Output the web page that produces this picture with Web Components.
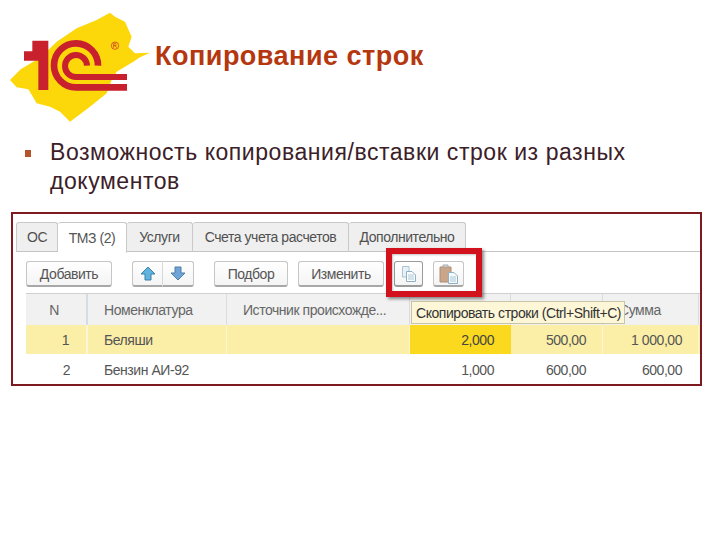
<!DOCTYPE html>
<html lang="ru">
<head>
<meta charset="UTF-8" />
<title>Копирование строк</title>
<style>
  html, body { margin: 0; background: #fff; }
</style>
</head>
<body>
<slide-page>
  <slide-header slot="head" heading="Копирование строк"></slide-header>
  <bullet-item slot="body">Возможность копирования/вставки строк из разных документов</bullet-item>
  <doc-shot slot="shot"></doc-shot>
</slide-page>

<template id="slide-page-template">
  <style>
    :host { display: block; width: 720px; height: 540px; overflow: hidden; font-family: "Liberation Sans", Arial, sans-serif; }
    .page { display: flex; flex-direction: column; }
  </style>
  <div class="page">
    <slot name="head"></slot>
    <slot name="body"></slot>
    <slot name="shot"></slot>
  </div>
</template>

<template id="slide-header-template">
  <style>
    :host { display: flex; height: 130px; align-items: flex-start; }
    svg { display: block; flex: none; width: 155px; height: 126px; }
    h1 { margin: 41px 0 0 0; font: bold 27px/30px "Liberation Sans", Arial, sans-serif; letter-spacing: .5px; color: #b5370f; white-space: nowrap; }
  </style>
  <svg viewBox="0 0 465 378" aria-hidden="true">
    <path fill="#fcd80b" d="M30 240 62 208 100 185 135 160 170 125 230 85 290 60 330 38 345 50 375 65 395 110 385 140 405 160 450 158 420 172 400 185 350 215 335 240 320 280 270 320 210 365 180 335 150 320 110 310 85 268 50 262Z"/>
    <path fill="#c8202c" d="M97 122H145V270H115V182H72V154H97Z"/>
    <g fill="none" stroke="#c8202c">
      <path stroke-width="20" d="M294 197A66 66 0 1 0 228 262H381"/>
      <path stroke-width="18" d="M261 197A33 33 0 1 0 228 231H381"/>
      <circle cx="345" cy="137" r="11" stroke-width="2"/>
      <path stroke-width="2" d="M341 143V131H347Q350 134 347 137H341M346 137 350 143"/>
    </g>
  </svg>
  <h1></h1>
</template>

<template id="bullet-item-template">
  <style>
    :host { display: flex; height: 82px; padding: 8px 70px 0 25px; box-sizing: border-box; font: 23px/29px "Liberation Sans", Arial, sans-serif; color: #3b2028; letter-spacing: .55px; }
    .mark { flex: none; width: 6px; height: 7px; margin: 12px 19px 0 0; background: #b5532c; }
  </style>
  <span class="mark"></span>
  <div><slot></slot></div>
</template>

<template id="doc-shot-template">
  <style>
    :host { display: block; position: relative; margin-left: 11px; width: 691px; height: 174px; box-sizing: border-box; border: 2px solid #7c1a1f; padding: 8px 0 0 3px; overflow: hidden; background: #fff; font: 14px/1 "Liberation Sans", Arial, sans-serif; letter-spacing: -.45px; color: #555; }
    .tools { display: flex; height: 41px; padding: 9px 0 0 10px; box-sizing: border-box; gap: 10px; }
    .pair { display: flex; margin: 0 10px; }
    .highlight { position: absolute; left: 373px; top: 34px; width: 96px; height: 49px; box-sizing: border-box; border: 6px solid #d2121c; box-shadow: 2px 2px 3px rgba(60,60,60,.6), inset 1px 1px 2px rgba(60,60,60,.3); }
    .tip { position: absolute; left: 398px; top: 87px; width: 214px; height: 23px; box-sizing: border-box; background: #fdf7d8; border: 1px solid #c8c4a8; line-height: 22px; padding-left: 4px; color: #333; white-space: nowrap; }
  </style>
  <tab-strip>
    <tab-item w="42">ОС</tab-item>
    <tab-item w="69" active>ТМЗ (2)</tab-item>
    <tab-item w="66">Услуги</tab-item>
    <tab-item w="156">Счета учета расчетов</tab-item>
    <tab-item w="117">Дополнительно</tab-item>
  </tab-strip>
  <div class="tools">
    <tool-btn w="86">Добавить</tool-btn>
    <div class="pair">
      <tool-btn w="31" joined="left" icon="up"></tool-btn>
      <tool-btn w="31" joined="right" icon="down"></tool-btn>
    </div>
    <tool-btn w="74">Подбор</tool-btn>
    <tool-btn w="86">Изменить</tool-btn>
    <tool-btn w="29" icon="copy" hovered></tool-btn>
    <tool-btn w="31" icon="paste"></tool-btn>
  </div>
  <data-grid></data-grid>
  <div class="highlight"></div>
  <div class="tip">Скопировать строки (Ctrl+Shift+C)</div>
</template>

<template id="tab-strip-template">
  <style>
    :host { display: flex; height: 30px; box-sizing: border-box; border-bottom: 1px solid #c4c4c4; }
  </style>
  <slot></slot>
</template>

<template id="tab-item-template">
  <style>
    :host { display: flex; align-items: center; justify-content: center; box-sizing: border-box; height: 30px; flex: none; background: #efefef; border: 1px solid #c9c9c9; border-bottom: 1px solid #c4c4c4; border-left-width: 0; border-radius: 3px 3px 0 0; color: #505050; white-space: nowrap; }
    :host(:first-child) { border-left-width: 1px; }
    :host([active]) { background: #fff; border-bottom-color: #fff; height: 31px; color: #555; }
  </style>
  <slot></slot>
</template>

<template id="tool-btn-template">
  <style>
    :host { display: flex; align-items: center; justify-content: center; box-sizing: border-box; height: 26px; flex: none; background: linear-gradient(#fff, #f4f4f4); border: 1px solid #c6c6c6; border-bottom: 2px solid #a8a8a8; border-radius: 3px; color: #555; white-space: nowrap; }
    :host([joined="left"]) { border-radius: 3px 0 0 3px; border-right-color: #d8d8d8; }
    :host([joined="right"]) { border-radius: 0 3px 3px 0; border-left-width: 0; }
    :host([hovered]) { border-color: #9a9a9a; }
    svg { display: block; }
  </style>
  <slot></slot>
</template>

<template id="data-grid-template">
  <style>
    :host { display: block; margin-left: 10px; }
    .row { display: grid; grid-template-columns: 62px 139px 183px 101px 92px 96px; }
    .cell { box-sizing: border-box; display: flex; align-items: center; padding: 0 16px; white-space: nowrap; color: #555; border-right: 1px solid transparent; }
    .num { justify-content: flex-end; }
    .head { height: 32px; background: #f1f1f1; border-top: 1px solid #d0d0d0; box-sizing: border-box; }
    .head .cell { border-right: 1px solid #dcdcdc; color: #666; }
    .head .cell:first-child { border-right: 2px solid #d6dbe6; justify-content: center; padding: 0 4px 0 0; }
    .one { height: 29px; background: #fbeea6; border-bottom: 1px solid #fff; box-sizing: content-box; }
    .one .cell { border-right: 1px solid #fdf6d4; }
    .one .cell:first-child { border-right: 2px solid #fdf6d4; }
    .one .cur { background: #fad91f; color: #444; border-right-color: #fad91f; }
    .two { height: 29px; }
    .one .cell:first-child, .two .cell:first-child { padding-right: 17px; }
  </style>
  <div class="row head">
    <div class="cell">N</div>
    <div class="cell">Номенклатура</div>
    <div class="cell">Источник происхожде...</div>
    <div class="cell"></div>
    <div class="cell"></div>
    <div class="cell">Сумма</div>
  </div>
  <div class="row one">
    <div class="cell num">1</div>
    <div class="cell">Беляши</div>
    <div class="cell"></div>
    <div class="cell num cur">2,000</div>
    <div class="cell num">500,00</div>
    <div class="cell num">1 000,00</div>
  </div>
  <div class="row two">
    <div class="cell num">2</div>
    <div class="cell">Бензин АИ-92</div>
    <div class="cell"></div>
    <div class="cell num">1,000</div>
    <div class="cell num">600,00</div>
    <div class="cell num">600,00</div>
  </div>
</template>

<script>
  // Base class: clones the template named after the tag into an open shadow root
  class Base extends HTMLElement {
    constructor() {
      super();
      this.attachShadow({ mode: 'open' });
      const t = document.getElementById(this.localName + '-template');
      this.shadowRoot.appendChild(t.content.cloneNode(true));
    }
  }

  class SlidePage extends Base {}
  class BulletItem extends Base {}
  class DocShot extends Base {}
  class TabStrip extends Base {}
  class DataGrid extends Base {}

  class SlideHeader extends Base {
    connectedCallback() {
      this.shadowRoot.querySelector('h1').textContent = this.getAttribute('heading');
    }
  }

  class TabItem extends Base {
    connectedCallback() {
      this.style.width = this.getAttribute('w') + 'px';
    }
  }

  const ICONS = {
    up: '<svg width="16" height="15" viewBox="0 0 16 15"><path d="M8 1 15 8H11V14H5V8H1Z" fill="#5fb4de" stroke="#3f7fa8"/></svg>',
    down: '<svg width="16" height="15" viewBox="0 0 16 15"><path d="M8 14 15 7H11V1H5V7H1Z" fill="#6ea4d8" stroke="#4f7fa8"/></svg>',
    copy: '<svg width="16" height="18" viewBox="0 0 16 18"><path d="M1.5 1.5H8V12H1.5Z" fill="#e6f0f6" stroke="#a9c6d6"/><path d="M5.5 6.5H11L14.5 10V16.5H5.5Z" fill="#fff" stroke="#8fb0c4"/><path d="M7 10H13M7 12H13M7 14H13" stroke="#a9c6d6"/></svg>',
    paste: '<svg width="22" height="22" viewBox="0 0 22 22"><path d="M2 4H13V19H2Z" fill="#c9a68a" stroke="#b08c70"/><path d="M5 4V2H10V4Z" fill="#ddd" stroke="#aaa"/><path d="M10.5 9.5H16L19.5 13V20.5H10.5Z" fill="#f6fafc" stroke="#8fb0c4"/><path d="M12 14H18M12 16H18M12 18H18" stroke="#a9c6d6"/></svg>'
  };

  class ToolBtn extends Base {
    connectedCallback() {
      this.style.width = this.getAttribute('w') + 'px';
      const icon = this.getAttribute('icon');
      if (icon) {
        const box = document.createElement('span');
        box.innerHTML = ICONS[icon];
        this.shadowRoot.appendChild(box);
      }
    }
  }

  customElements.define('slide-page', SlidePage);
  customElements.define('slide-header', SlideHeader);
  customElements.define('bullet-item', BulletItem);
  customElements.define('doc-shot', DocShot);
  customElements.define('tab-strip', TabStrip);
  customElements.define('tab-item', TabItem);
  customElements.define('tool-btn', ToolBtn);
  customElements.define('data-grid', DataGrid);
</script>
</body>
</html>
